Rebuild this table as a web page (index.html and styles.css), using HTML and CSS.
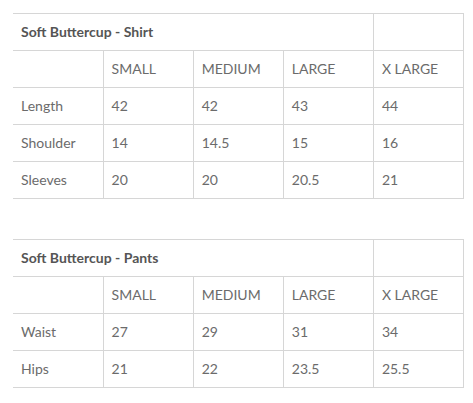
FILE: index.html
```html
<!DOCTYPE html>
<html>
<head>
<meta charset="utf-8">
<link rel="stylesheet" href="styles.css">
</head>
<body>
<div class="page">
  <table class="size-table">
    <tr class="title-row"><td colspan="4" class="title">Soft Buttercup - Shirt</td><td></td></tr>
    <tr><td></td><td>SMALL</td><td>MEDIUM</td><td>LARGE</td><td>X LARGE</td></tr>
    <tr><td>Length</td><td>42</td><td>42</td><td>43</td><td>44</td></tr>
    <tr><td>Shoulder</td><td>14</td><td>14.5</td><td>15</td><td>16</td></tr>
    <tr><td>Sleeves</td><td>20</td><td>20</td><td>20.5</td><td>21</td></tr>
  </table>
  <table class="size-table">
    <tr class="title-row"><td colspan="4" class="title">Soft Buttercup - Pants</td><td></td></tr>
    <tr><td></td><td>SMALL</td><td>MEDIUM</td><td>LARGE</td><td>X LARGE</td></tr>
    <tr><td>Waist</td><td>27</td><td>29</td><td>31</td><td>34</td></tr>
    <tr><td>Hips</td><td>21</td><td>22</td><td>23.5</td><td>25.5</td></tr>
  </table>
</div>
</body>
</html>
```
FILE: styles.css
```css
html, body { margin: 0; padding: 0; background: #fff; }
.page {
  padding: 13px 10px 0 13px;
  display: flex;
  flex-direction: column;
  gap: 40px;
}
.size-table {
  border-collapse: collapse;
  width: 451px;
  table-layout: fixed;
  font-family: Lato, "Noto Sans", sans-serif;
  font-size: 14px;
  color: #6b6b6b;
  border-top: 1px solid #d6d6d6;
}
.size-table td {
  height: 37px;
  padding: 0 8px 2px;
  border-right: 1px solid #d6d6d6;
  border-bottom: 1px solid #d6d6d6;
  vertical-align: middle;
  box-sizing: border-box;
  white-space: nowrap;
}
.size-table td.title {
  font-weight: 700;
  color: #555;
}
```
